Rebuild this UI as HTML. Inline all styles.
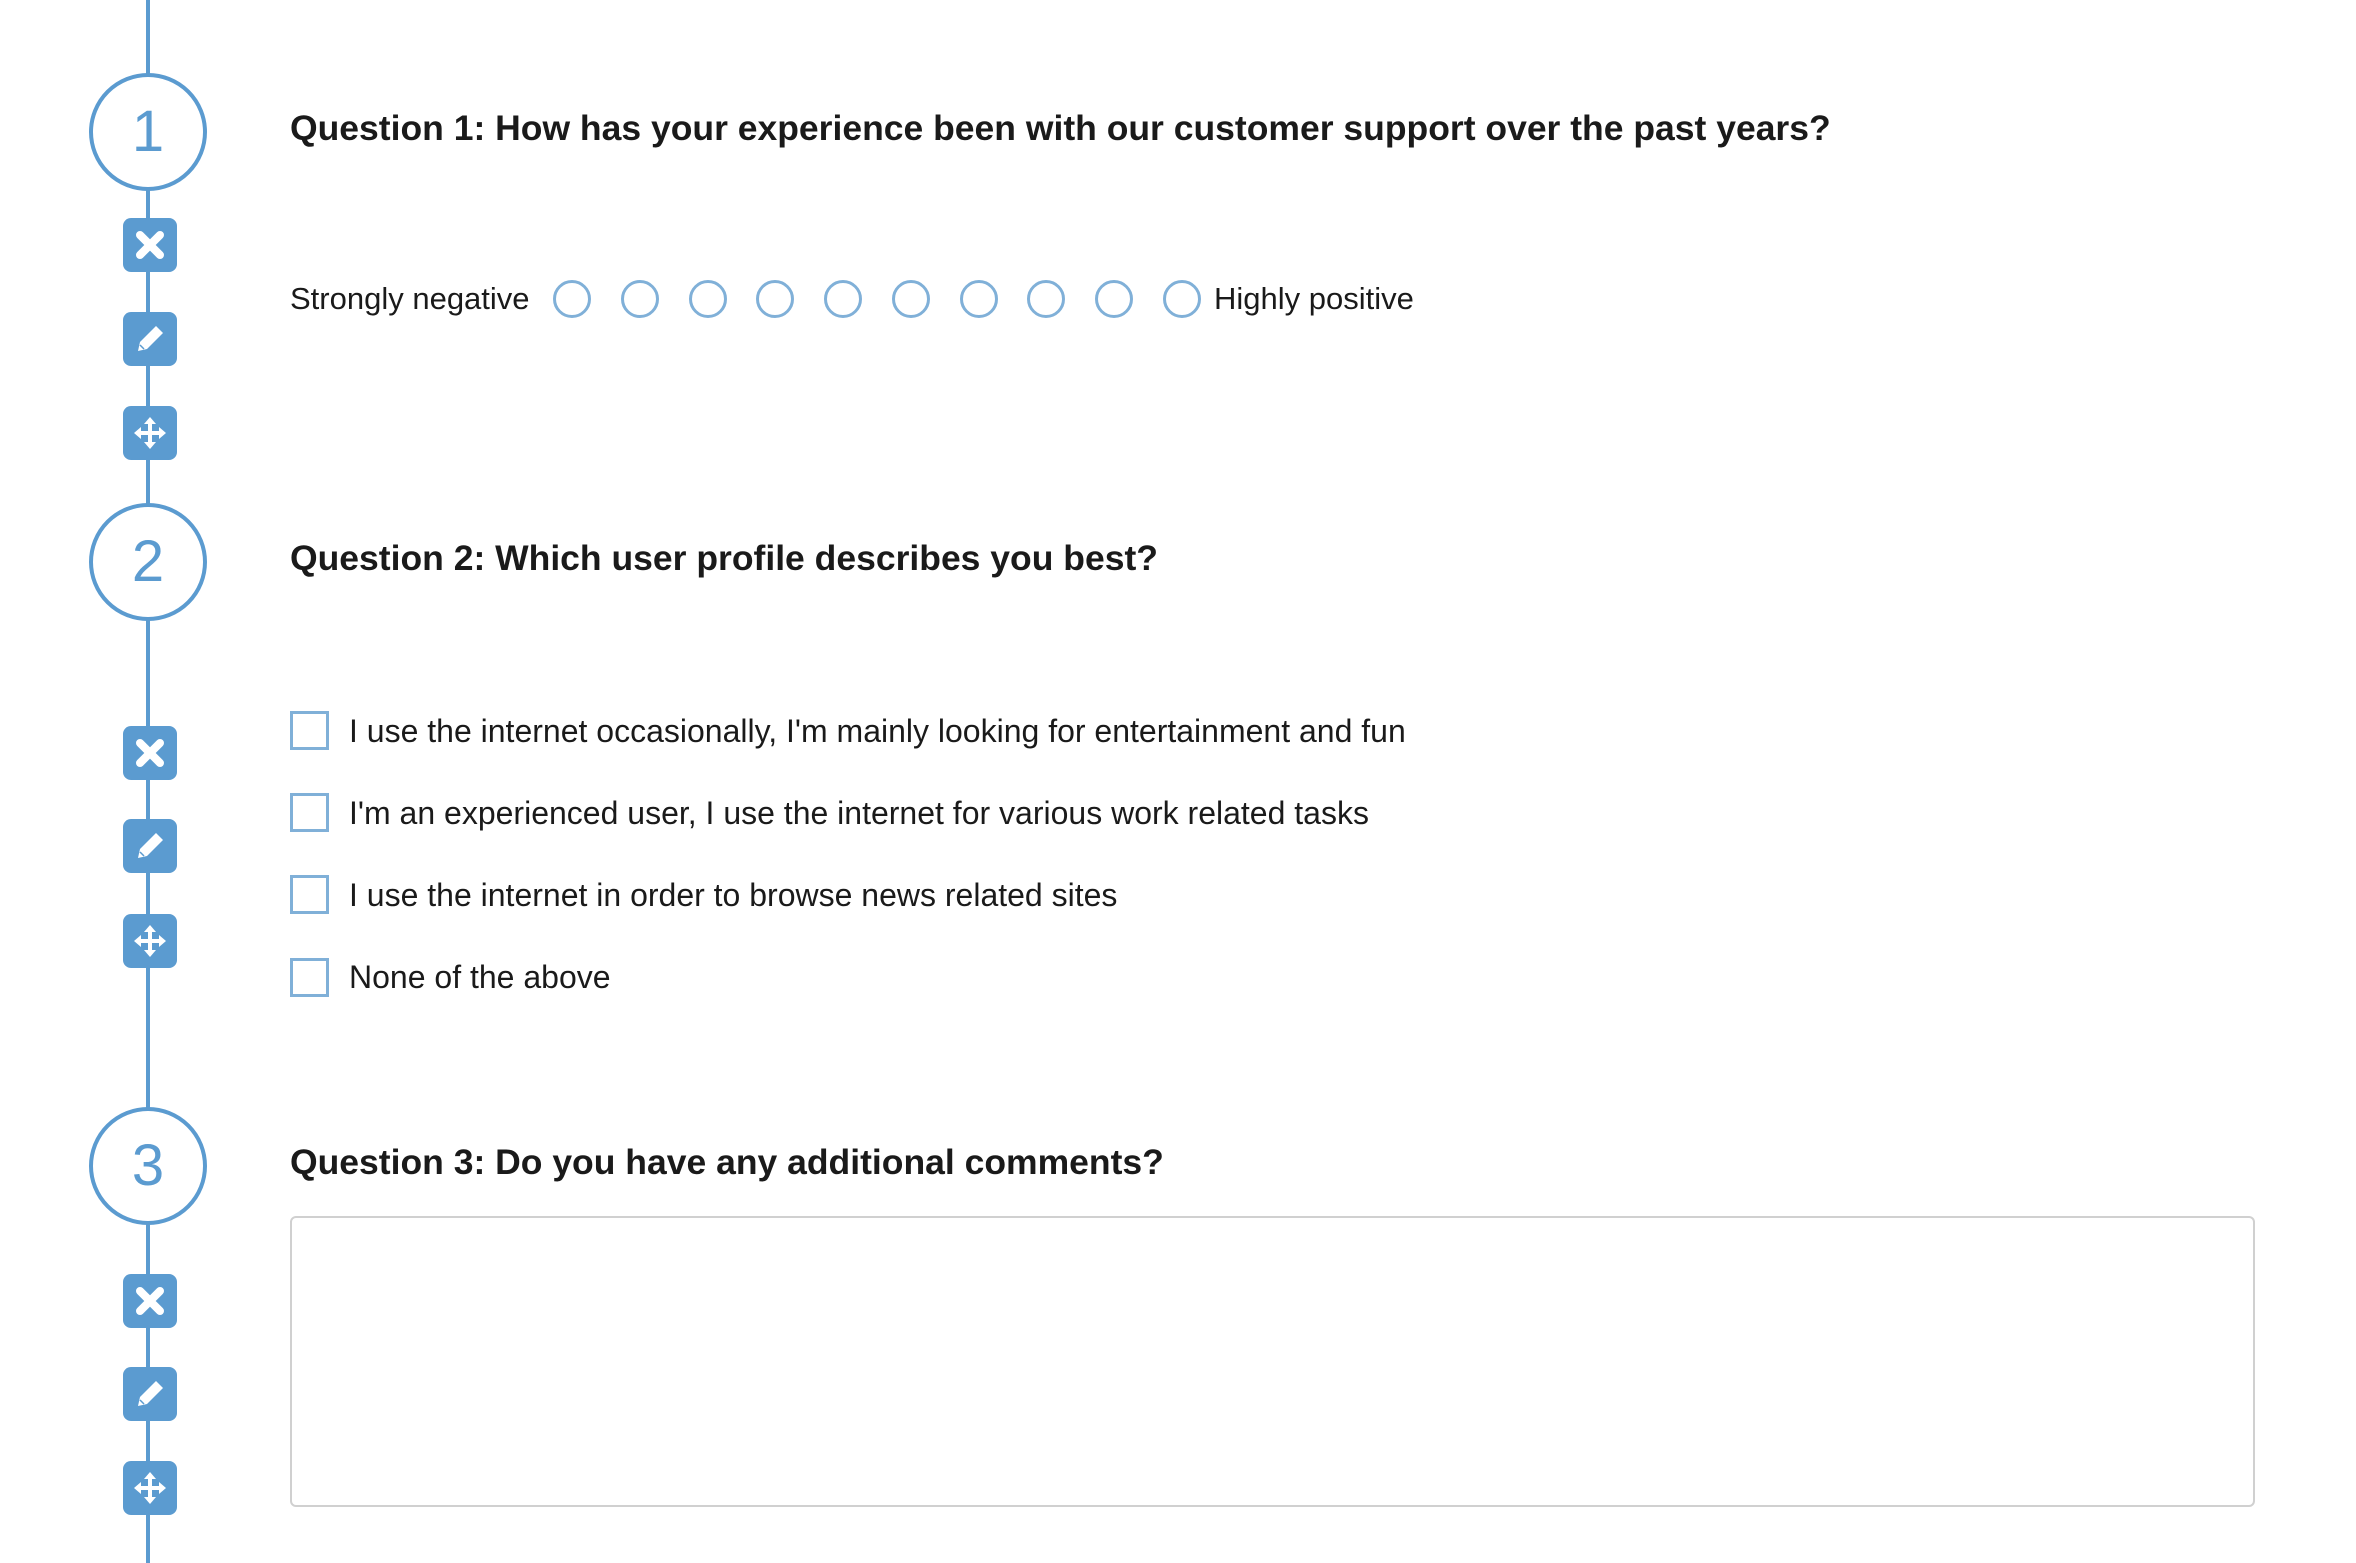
<!DOCTYPE html>
<html><head><meta charset="utf-8"><style>
html,body{margin:0;padding:0;background:#fff;}
body{width:2356px;height:1563px;position:relative;overflow:hidden;font-family:"Liberation Sans",sans-serif;color:#1a1a1a;}
.line{position:absolute;left:146px;top:0;width:4px;height:1563px;background:#5b9bd0;}
.num{position:absolute;width:110px;height:110px;border:4px solid #5b9bd0;border-radius:50%;background:#fff;color:#5b9bd0;font-size:58px;text-align:center;line-height:110px;}
.btn{position:absolute;left:123px;width:54px;height:54px;border-radius:8px;background:#5b9bd0;}
.btn svg{position:absolute;left:0;top:0;}
.q{position:absolute;left:290px;font-weight:bold;font-size:35.5px;white-space:nowrap;}
.t{position:absolute;font-size:32px;white-space:nowrap;}
.r{position:absolute;width:32px;height:32px;border:3.5px solid #80b0d8;border-radius:50%;}
.cb{position:absolute;left:290px;width:33px;height:33px;border:3.5px solid #80b0d8;}
.ta{position:absolute;left:290px;top:1216px;width:1961px;height:287px;border:2px solid #d0d0d0;border-radius:6px;}
</style></head><body>
<div class="line"></div>

<div class="num" style="left:89px;top:73px">1</div>
<div class="num" style="left:89px;top:503px">2</div>
<div class="num" style="left:89px;top:1107px">3</div>

<div class="btn" style="top:218px"><svg width="54" height="54" viewBox="0 0 54 54"><path d="M17 17L37 37M37 17L17 37" stroke="#fff" stroke-width="8" stroke-linecap="round"/></svg></div>
<div class="btn" style="top:312px"><svg width="54" height="54" viewBox="0 0 54 54"><path d="M33 14l7 7-16 16-9 2 2-9z" fill="#fff"/><path d="M17 33l4 4" stroke="#5b9bd0" stroke-width="1.5"/></svg></div>
<div class="btn" style="top:406px"><svg width="54" height="54" viewBox="0 0 54 54"><path d="M27 11l-6 7h4v7h-7v-4l-7 6 7 6v-4h7v7h-4l6 7 6-7h-4v-7h7v4l7-6-7-6v4h-7v-7h4z" fill="#fff"/></svg></div>

<div class="btn" style="top:726px"><svg width="54" height="54" viewBox="0 0 54 54"><path d="M17 17L37 37M37 17L17 37" stroke="#fff" stroke-width="8" stroke-linecap="round"/></svg></div>
<div class="btn" style="top:819px"><svg width="54" height="54" viewBox="0 0 54 54"><path d="M33 14l7 7-16 16-9 2 2-9z" fill="#fff"/><path d="M17 33l4 4" stroke="#5b9bd0" stroke-width="1.5"/></svg></div>
<div class="btn" style="top:914px"><svg width="54" height="54" viewBox="0 0 54 54"><path d="M27 11l-6 7h4v7h-7v-4l-7 6 7 6v-4h7v7h-4l6 7 6-7h-4v-7h7v4l7-6-7-6v4h-7v-7h4z" fill="#fff"/></svg></div>

<div class="btn" style="top:1274px"><svg width="54" height="54" viewBox="0 0 54 54"><path d="M17 17L37 37M37 17L17 37" stroke="#fff" stroke-width="8" stroke-linecap="round"/></svg></div>
<div class="btn" style="top:1367px"><svg width="54" height="54" viewBox="0 0 54 54"><path d="M33 14l7 7-16 16-9 2 2-9z" fill="#fff"/><path d="M17 33l4 4" stroke="#5b9bd0" stroke-width="1.5"/></svg></div>
<div class="btn" style="top:1461px"><svg width="54" height="54" viewBox="0 0 54 54"><path d="M27 11l-6 7h4v7h-7v-4l-7 6 7 6v-4h7v7h-4l6 7 6-7h-4v-7h7v4l7-6-7-6v4h-7v-7h4z" fill="#fff"/></svg></div>

<div class="q" style="top:108px">Question 1: How has your experience been with our customer support over the past years?</div>
<div class="t" style="left:290px;top:281px;font-size:31px">Strongly negative</div>
<div class="r" style="left:553px;top:280px"></div>
<div class="r" style="left:621px;top:280px"></div>
<div class="r" style="left:689px;top:280px"></div>
<div class="r" style="left:756px;top:280px"></div>
<div class="r" style="left:824px;top:280px"></div>
<div class="r" style="left:892px;top:280px"></div>
<div class="r" style="left:960px;top:280px"></div>
<div class="r" style="left:1027px;top:280px"></div>
<div class="r" style="left:1095px;top:280px"></div>
<div class="r" style="left:1163px;top:280px"></div>
<div class="t" style="left:1214px;top:281px;font-size:31px">Highly positive</div>

<div class="q" style="top:538px">Question 2: Which user profile describes you best?</div>
<div class="cb" style="top:711px"></div><div class="t" style="left:349px;top:713px">I use the internet occasionally, I'm mainly looking for entertainment and fun</div>
<div class="cb" style="top:793px"></div><div class="t" style="left:349px;top:795px">I'm an experienced user, I use the internet for various work related tasks</div>
<div class="cb" style="top:875px"></div><div class="t" style="left:349px;top:877px">I use the internet in order to browse news related sites</div>
<div class="cb" style="top:958px"></div><div class="t" style="left:349px;top:959px">None of the above</div>

<div class="q" style="top:1142px">Question 3: Do you have any additional comments?</div>
<div class="ta"></div>
</body></html>
